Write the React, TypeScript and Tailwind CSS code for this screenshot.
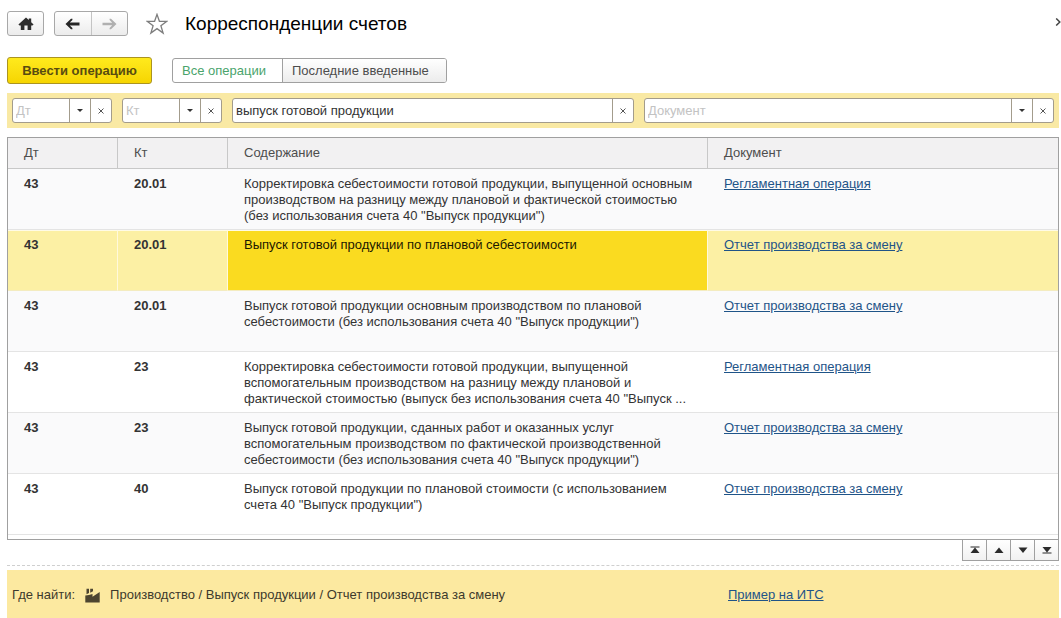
import { useState } from "react";
import type { ReactNode } from "react";

type Entry = { dt: string; kt: string; text: string[]; doc: string };

const entries: Entry[] = [
  {
    dt: "43",
    kt: "20.01",
    text: [
      "Корректировка себестоимости готовой продукции, выпущенной основным",
      "производством на разницу между плановой и фактической стоимостью",
      '(без использования счета 40 "Выпуск продукции")',
    ],
    doc: "Регламентная операция",
  },
  {
    dt: "43",
    kt: "20.01",
    text: ["Выпуск готовой продукции по плановой себестоимости"],
    doc: "Отчет производства за смену",
  },
  {
    dt: "43",
    kt: "20.01",
    text: [
      "Выпуск готовой продукции основным производством по плановой",
      'себестоимости (без использования счета 40 "Выпуск продукции")',
    ],
    doc: "Отчет производства за смену",
  },
  {
    dt: "43",
    kt: "23",
    text: [
      "Корректировка себестоимости готовой продукции, выпущенной",
      "вспомогательным производством на разницу между плановой и",
      'фактической стоимостью (выпуск без использования счета 40 "Выпуск ...',
    ],
    doc: "Регламентная операция",
  },
  {
    dt: "43",
    kt: "23",
    text: [
      "Выпуск готовой продукции, сданных работ и оказанных услуг",
      "вспомогательным производством по фактической производственной",
      'себестоимости (без использования счета 40 "Выпуск продукции")',
    ],
    doc: "Отчет производства за смену",
  },
  {
    dt: "43",
    kt: "40",
    text: [
      "Выпуск готовой продукции по плановой стоимости (с использованием",
      'счета 40 "Выпуск продукции")',
    ],
    doc: "Отчет производства за смену",
  },
];

function HomeIcon() {
  return (
    <svg width="16" height="14" viewBox="0 0 16 14" fill="#2e2e2e" aria-hidden="true">
      <path d="M8 0.5 0.4 7.6 1.6 8.4H2.8V13H6.4V8.6H9.6V13H13.2V8.4H14.4L15.6 7.6 13.2 5.3V1.4H10.8V3Z" />
    </svg>
  );
}

function ArrowIcon({ forward = false }: { forward?: boolean }) {
  return (
    <svg width="15" height="12" viewBox="0 0 15 12" aria-hidden="true">
      {forward ? (
        <path d="M14.5 6 9 0.8H7.6V2L10.2 4.8H0.5V7.2H10.2L7.6 10V11.2H9Z" fill="#b0b0b0" />
      ) : (
        <path d="M0.5 6 6 0.8H7.4V2L4.8 4.6H14.5V7.4H4.8L7.4 10V11.2H6Z" fill="#262626" />
      )}
    </svg>
  );
}

function StarIcon() {
  return (
    <svg width="22" height="22" viewBox="0 0 22 22" fill="none" stroke="#7d7d7d" strokeWidth="1.3" aria-hidden="true">
      <path d="M11 1.4 13.4 8.3H20.8L14.9 12.7 17.1 20 11 15.6 4.9 20 7.1 12.7 1.2 8.3H8.6Z" />
    </svg>
  );
}

function FactoryIcon() {
  return (
    <svg width="15" height="15" viewBox="0 0 15 15" fill="#4d4530" aria-hidden="true">
      <path d="M0.3 14.5V7.5L4 7 7.5 6V8.8L14.7 4V14.5Z" />
      <path d="M1.5 0.8H4V5L1.5 6.2ZM5.2 0.8H8V3.2L5.2 4.8Z" />
    </svg>
  );
}

function CaretIcon() {
  return (
    <svg width="6" height="3" viewBox="0 0 6 3" fill="#333" aria-hidden="true">
      <path d="M0 0H6L3 3Z" />
    </svg>
  );
}

function CrossIcon() {
  return (
    <svg width="6" height="6" viewBox="0 0 6 6" stroke="#555" strokeWidth="1" aria-hidden="true">
      <path d="M0.5 0.5 5.5 5.5M5.5 0.5 0.5 5.5" />
    </svg>
  );
}

function FilterField({
  label,
  initial = "",
  list = true,
  className,
}: {
  label: string;
  initial?: string;
  list?: boolean;
  className: string;
}) {
  const [value, setValue] = useState(initial);
  return (
    <div className={`flex h-[25px] overflow-hidden rounded-[3px] border border-[#a39c8c] bg-white ${className}`}>
      <input
        aria-label={label}
        placeholder={label === "Содержание" ? "" : label}
        value={value}
        onChange={(e) => setValue(e.target.value)}
        className="min-w-0 flex-1 px-[3px] text-[#333] outline-none placeholder:text-[#c3c3c3]"
      />
      {list && (
        <button aria-label={`${label}: выбрать`} className="flex w-[21px] items-center justify-center border-l border-[#a39c8c]">
          <CaretIcon />
        </button>
      )}
      <button
        aria-label={`${label}: очистить`}
        onClick={() => setValue("")}
        className="flex w-[21px] items-center justify-center border-l border-[#a39c8c]"
      >
        <CrossIcon />
      </button>
    </div>
  );
}

function ScrollButton({ label, children }: { label: string; children: ReactNode }) {
  return (
    <button
      aria-label={label}
      className="flex h-[21px] w-6 items-center justify-center border-r border-b border-[#a0a0a0] bg-linear-to-b from-white to-[#f1f1f1] first:w-[25px] first:border-l"
    >
      <svg width="10" height="8" viewBox="0 0 10 8" fill="#2b2b2b" aria-hidden="true">
        {children}
      </svg>
    </button>
  );
}

export default function App() {
  const [selected, setSelected] = useState(1);
  return (
    <div className="flex min-h-screen flex-col bg-white pl-[7px] font-['Liberation_Sans',Arial,sans-serif] text-[13px] leading-4 text-[#333]">
      <header className="flex items-center pt-[11px]">
        <button aria-label="Начальная страница" className="flex h-[25px] w-[37px] items-center justify-center rounded-[3px] border border-[#a8a8a8] bg-linear-to-b from-white to-[#ececec]">
          <HomeIcon />
        </button>
        <div className="ml-[10px] flex h-[25px] w-[74px] overflow-hidden rounded-[3px] border border-[#a8a8a8] bg-linear-to-b from-white to-[#ececec]">
          <button aria-label="Назад" className="flex flex-1 items-center justify-center">
            <ArrowIcon />
          </button>
          <button aria-label="Вперед" className="flex flex-1 items-center justify-center border-l border-[#c4c4c4]">
            <ArrowIcon forward />
          </button>
        </div>
        <button aria-label="Добавить в избранное" className="ml-[18px]">
          <StarIcon />
        </button>
        <h1 className="ml-[17px] text-[19px] leading-6 text-black">Корреспонденции счетов</h1>
        <button aria-label="Еще" className="mb-1 ml-auto">
          <svg width="6" height="8" viewBox="0 0 6 8" fill="none" stroke="#444" strokeWidth="1.5" aria-hidden="true">
            <path d="M1.2 0.5 4.8 4 1.2 7.5" />
          </svg>
        </button>
      </header>

      <main className="flex flex-1 flex-col pr-[2px]">
        <div className="mt-[21px] flex items-center">
          <button className="h-[27px] w-[145px] rounded-[3px] border border-[#ab9420] bg-linear-to-b from-[#ffea1c] to-[#f6d500] font-bold text-[#584c10]">
            Ввести операцию
          </button>
          <div className="ml-5 flex h-[25px] overflow-hidden rounded-[3px] border border-[#a0a0a0] text-[#4d4d4d]">
            <button className="w-[109px] px-[9px] text-left text-[#4aa46c]">Все операции</button>
            <button className="w-[164px] border-l border-[#a0a0a0] bg-linear-to-b from-white to-[#ececec] px-[9px] text-left">
              Последние введенные
            </button>
          </div>
        </div>

        <div className="mt-[9px] flex gap-[10px] bg-[#f9e9a4] p-[5px]">
          <FilterField label="Дт" className="w-[100px]" />
          <FilterField label="Кт" className="w-[100px]" />
          <FilterField label="Содержание" initial="выпуск готовой продукции" list={false} className="w-[402px]" />
          <FilterField label="Документ" className="flex-1" />
        </div>

        <div className="mt-[9px] border border-[#a0a0a0] pb-1">
          <table className="w-full table-fixed border-separate border-spacing-0">
            <colgroup>
              <col className="w-[110px]" />
              <col className="w-[110px]" />
              <col className="w-[480px]" />
              <col />
            </colgroup>
            <thead>
              <tr className="h-[31px] bg-[#f2f1f2] text-left text-[#4d4d4d]">
                {["Дт", "Кт", "Содержание", "Документ"].map((name) => (
                  <th key={name} className="border-r border-b border-[#c8c8c8] px-4 font-normal last:border-r-0">
                    {name}
                  </th>
                ))}
              </tr>
            </thead>
            <tbody>
              {entries.map((e, i) => {
                const active = i === selected;
                const cell = active
                  ? "border-r border-y border-t-[#fffbe6] border-r-[#fff9dc] border-b-[#f4ecc0] bg-[#fcf0a4] pt-[6px]"
                  : "border-b border-[#e4e4e4] pt-[7px]";
                return (
                  <tr
                    key={i}
                    onClick={() => setSelected(i)}
                    className="h-[61px] align-top odd:bg-[#fafafb]"
                  >
                    <td className={`px-4 font-bold ${cell}`}>{e.dt}</td>
                    <td className={`px-4 font-bold ${cell}`}>{e.kt}</td>
                    <td
                      className={`pl-4 whitespace-nowrap ${
                        active
                          ? "border-y border-r border-t-[#fffbe6] border-r-[#fff9dc] border-b-[#f4ecc0] bg-[#fadb20] pt-[6px] text-[#1c1800]"
                          : cell
                      }`}
                    >
                      {e.text.map((line) => (
                        <div key={line}>{line}</div>
                      ))}
                    </td>
                    <td className={`px-4 last:border-r-0 ${cell}`}>
                      <a href="#document" className="text-[#1f5488] underline">
                        {e.doc}
                      </a>
                    </td>
                  </tr>
                );
              })}
            </tbody>
          </table>
        </div>

        <div className="flex justify-end">
          <ScrollButton label="В начало">
            <path d="M0.5 0.5H9.5V1.5H0.5ZM5 1.5 9.5 7H0.5Z" />
          </ScrollButton>
          <ScrollButton label="Вверх">
            <path d="M5 1.5 9.5 7H0.5Z" />
          </ScrollButton>
          <ScrollButton label="Вниз">
            <path d="M0.5 1.5H9.5L5 7Z" />
          </ScrollButton>
          <ScrollButton label="В конец">
            <path d="M0.5 1H9.5L5 6.5ZM0.5 6.5H9.5V7.5H0.5Z" />
          </ScrollButton>
        </div>

        <div className="mt-1 border-t border-dashed border-[#cfcfcf]" />
        <footer className="mt-1 flex flex-1 items-center bg-[#fce9a0] px-[5px] pt-[2px] text-[#3d3a2c]">
          <div className="flex w-[716px] items-center">
            <span>Где найти:</span>
            <span className="mr-[10px] ml-[10px]">
              <FactoryIcon />
            </span>
            <span>Производство / Выпуск продукции / Отчет производства за смену</span>
          </div>
          <a href="#example" className="text-[#1f5488] underline">
            Пример на ИТС
          </a>
        </footer>
      </main>
    </div>
  );
}
